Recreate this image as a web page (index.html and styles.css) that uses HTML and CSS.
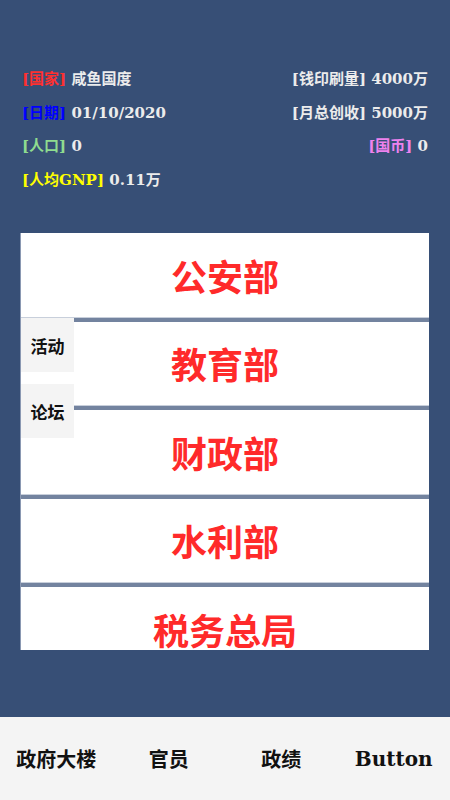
FILE: index.html
```html
<!DOCTYPE html>
<html>
<head>
    <meta charset="utf-8">
    <link rel="stylesheet" href="styles.css">
</head>
<body>
<div class="page">
    <div class="stats">
        <div class="stat-row">
            <span><span class="tag red">[国家]</span> 咸鱼国度</span>
            <span><span class="tag">[钱印刷量]</span> 4000万</span>
        </div>
        <div class="stat-row">
            <span><span class="tag blue">[日期]</span> 01/10/2020</span>
            <span><span class="tag">[月总创收]</span> 5000万</span>
        </div>
        <div class="stat-row">
            <span><span class="tag green">[人口]</span> 0</span>
            <span><span class="tag violet">[国币]</span> 0</span>
        </div>
        <div class="stat-row">
            <span><span class="tag yellow">[人均GNP]</span> 0.11万</span>
        </div>
    </div>

    <div class="panel">
        <div class="dept">公安部</div>
        <div class="dept">教育部</div>
        <div class="dept">财政部</div>
        <div class="dept">水利部</div>
        <div class="dept">税务总局</div>

        <div class="side-tabs">
            <div class="side-tab">活动</div>
            <div class="side-tab">论坛</div>
        </div>
    </div>
</div>

<div class="nav">
    <div class="nav-item">政府大楼</div>
    <div class="nav-item">官员</div>
    <div class="nav-item">政绩</div>
    <div class="nav-item">Button</div>
</div>
</body>
</html>
```

FILE: styles.css
```css
body {
    margin: 0;
    width: 450px;
    height: 800px;
    background-color: #374f76;
    font-family: "DejaVu Serif", "Noto Sans CJK SC", serif;
    font-weight: bold;
    display: flex;
    flex-direction: column;
    overflow: hidden;
}
.page {
    flex: 1;
}
.stats {
    padding: 63px 22px 0 22px;
    color: #ececec;
    font-size: 15px;
}
.stat-row {
    display: flex;
    justify-content: space-between;
    height: 33.5px;
    line-height: 33.5px;
}
.tag { color: #ececec; }
.red { color: #ff3030; }
.blue { color: #0000ff; }
.green { color: #8fdc8f; }
.yellow { color: #ffff00; }
.violet { color: #ee82ee; }

.panel {
    position: relative;
    margin: 36px 21px 0 20px;
    height: 417px;
    overflow: hidden;
    background-color: #73839f;
    border-left: 1px solid #8a98b2;
    display: flex;
    flex-direction: column;
    gap: 5px;
}
.dept {
    flex: 0 0 83.5px;
    background-color: #fff;
    color: #ff2a2a;
    font-size: 36px;
    display: flex;
    align-items: center;
    justify-content: center;
    box-shadow: 0 1px 0 #c8cfdb;
}
.side-tabs {
    position: absolute;
    left: 0;
    top: 85px;
    display: flex;
    flex-direction: column;
    gap: 12px;
}
.side-tab {
    width: 53px;
    height: 54px;
    background-color: #f4f4f4;
    color: #111;
    font-size: 17px;
    display: flex;
    align-items: center;
    justify-content: center;
}
.nav {
    height: 83px;
    background-color: #f4f4f4;
    display: flex;
}
.nav-item {
    flex: 1;
    display: flex;
    align-items: center;
    justify-content: center;
    font-size: 20px;
    color: #111;
}
```
